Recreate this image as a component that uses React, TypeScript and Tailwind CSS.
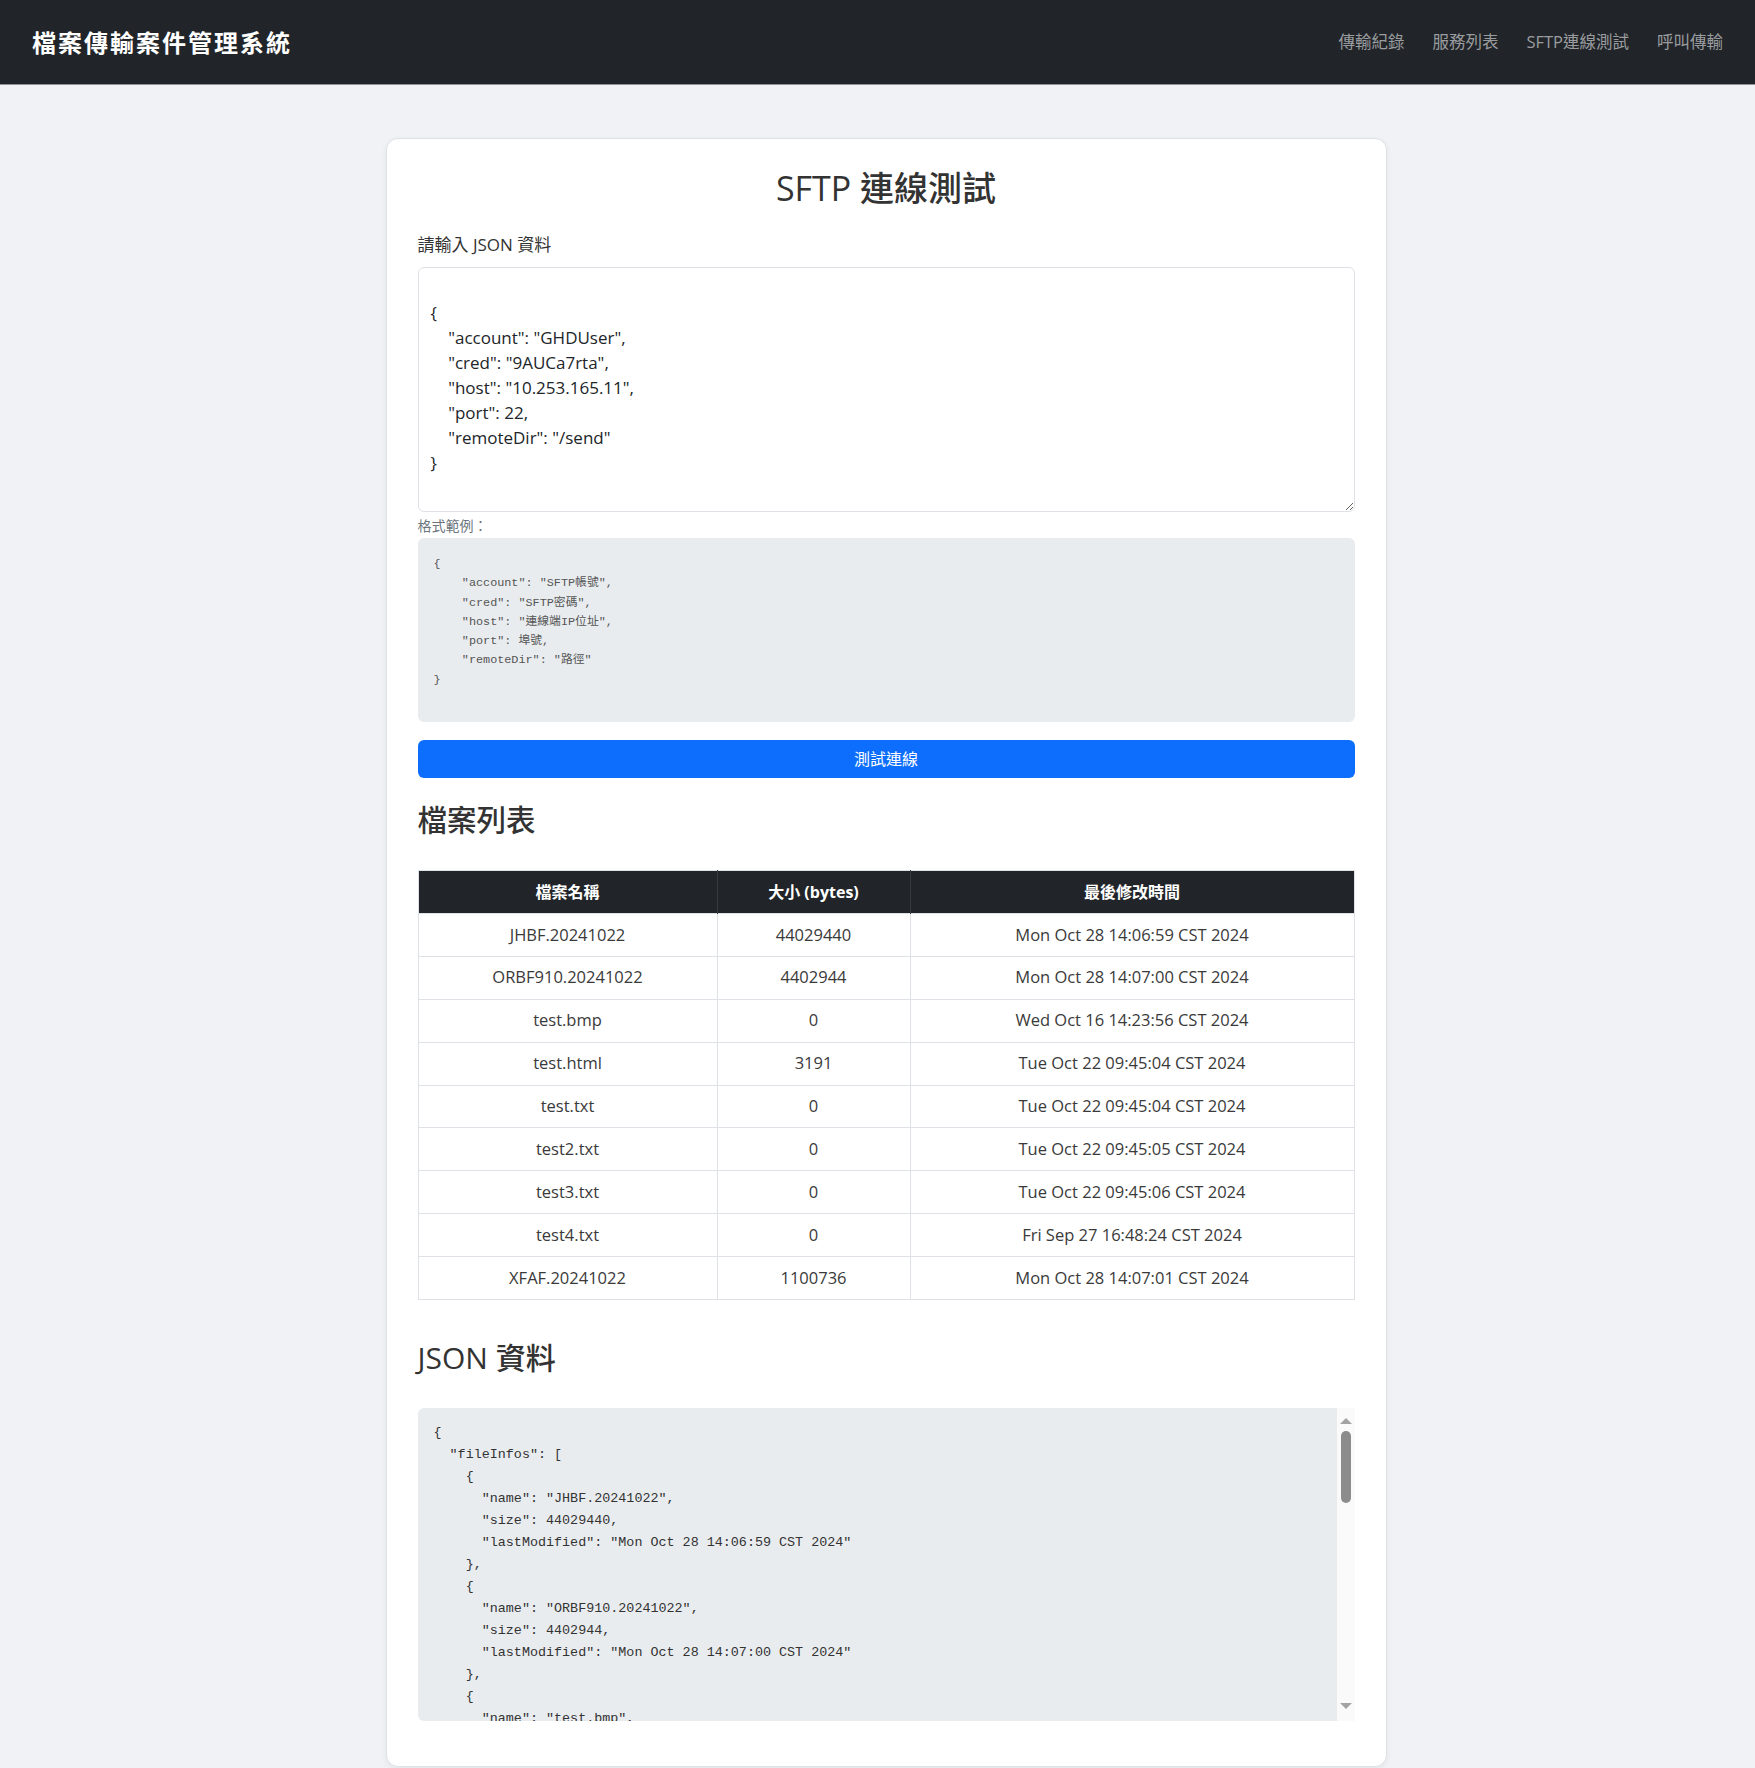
import React from 'react';

const files = [
  { name: 'JHBF.20241022', size: 44029440, lastModified: 'Mon Oct 28 14:06:59 CST 2024' },
  { name: 'ORBF910.20241022', size: 4402944, lastModified: 'Mon Oct 28 14:07:00 CST 2024' },
  { name: 'test.bmp', size: 0, lastModified: 'Wed Oct 16 14:23:56 CST 2024' },
  { name: 'test.html', size: 3191, lastModified: 'Tue Oct 22 09:45:04 CST 2024' },
  { name: 'test.txt', size: 0, lastModified: 'Tue Oct 22 09:45:04 CST 2024' },
  { name: 'test2.txt', size: 0, lastModified: 'Tue Oct 22 09:45:05 CST 2024' },
  { name: 'test3.txt', size: 0, lastModified: 'Tue Oct 22 09:45:06 CST 2024' },
  { name: 'test4.txt', size: 0, lastModified: 'Fri Sep 27 16:48:24 CST 2024' },
  { name: 'XFAF.20241022', size: 1100736, lastModified: 'Mon Oct 28 14:07:01 CST 2024' },
];

const inputJson = `
{
    "account": "GHDUser",
    "cred": "9AUCa7rta",
    "host": "10.253.165.11",
    "port": 22,
    "remoteDir": "/send"
}
`;

const sampleJson = `{
    "account": "SFTP帳號",
    "cred": "SFTP密碼",
    "host": "連線端IP位址",
    "port": 埠號,
    "remoteDir": "路徑"
}
`;

const navLinks = ['傳輸紀錄', '服務列表', 'SFTP連線測試', '呼叫傳輸'];

export default function App() {
  const resultJson = JSON.stringify({ fileInfos: files }, null, 2);

  return (
    <div className="min-h-screen bg-[#f0f2f5] font-['Open_Sans','Noto_Sans_CJK_TC',sans-serif] text-[#212529]">
      {/* Navbar */}
      <nav className="h-[85px] bg-[#212529] border-b border-[#8f9296] flex items-center justify-between pl-8 pr-[18px]">
        <div className="text-white text-[24px] font-bold tracking-[2px] font-['Noto_Sans_CJK_TC',sans-serif]">
          檔案傳輸案件管理系統
        </div>
        <div className="flex items-center">
          {navLinks.map((l) => (
            <a key={l} className="px-[14px] text-[16.5px] text-[#9a9c9f] cursor-pointer">
              {l}
            </a>
          ))}
        </div>
      </nav>

      {/* Main card */}
      <div className="flex justify-center pt-[53px] pl-[17px]">
        <div className="w-[1001px] bg-white rounded-[12px] border border-[#dee2e6] shadow-[0_2px_6px_rgba(0,0,0,0.06)] px-[31px] pt-[30px] pb-[45px]">
          <h2 className="text-[34px] leading-[38px] font-medium text-center text-[#333]">SFTP 連線測試</h2>

          <label className="block mt-[26px] text-[17px] leading-[24px] text-[#333]">請輸入 JSON 資料</label>
          <textarea
            defaultValue={inputJson}
            className="block w-full mt-[10px] h-[245px] border border-[#dee2e6] rounded-[6px] px-3 py-[7px] text-[17px] leading-[25px] text-[#212529] outline-none font-['Open_Sans','Noto_Sans_CJK_TC',sans-serif]"
          />

          <div className="mt-[3px] text-[14px] leading-[21px] text-[#6c757d]">格式範例：</div>
          <pre className="mt-[2px] h-[184px] bg-[#e9ecef] rounded-[6px] px-4 pt-[17px] text-[11.8px] leading-[19.3px] text-[#555] font-['Liberation_Mono','Noto_Sans_CJK_TC',monospace] overflow-hidden">
            {sampleJson}
          </pre>

          <button className="mt-[18px] w-full h-[38px] rounded-[6px] bg-[#0d6efd] text-white text-[16px]">
            測試連線
          </button>

          <h3 className="mt-[25px] text-[29.5px] leading-[34px] font-medium text-[#333]">檔案列表</h3>

          <table className="mt-[33px] w-full border-collapse border border-[#dee2e6] text-center">
            <thead>
              <tr className="bg-[#212529] text-white h-[43px]">
                <th className="w-[299px] font-bold text-[16px] border-r border-[#373b3e]">檔案名稱</th>
                <th className="w-[193px] font-bold text-[16px] border-r border-[#373b3e]">大小 (bytes)</th>
                <th className="font-bold text-[16px]">最後修改時間</th>
              </tr>
            </thead>
            <tbody className="text-[16.5px] text-[#3a3a3a]">
              {files.map((f) => (
                <tr key={f.name} className="h-[42.9px] border-t border-[#dee2e6]">
                  <td className="border-r border-[#dee2e6]">{f.name}</td>
                  <td className="border-r border-[#dee2e6]">{f.size}</td>
                  <td>{f.lastModified}</td>
                </tr>
              ))}
            </tbody>
          </table>

          <h3 className="mt-[41px] text-[30px] leading-[34px] font-medium text-[#333]">JSON 資料</h3>

          <div className="mt-[33px] h-[313px] flex">
            <pre className="flex-1 bg-[#e9ecef] rounded-l-[6px] px-4 py-[14px] text-[13.4px] leading-[22px] text-[#333] font-['Liberation_Mono',monospace] overflow-hidden">
              {resultJson}
            </pre>
            <div className="w-[18px] bg-[#fafafa] flex flex-col items-center">
              <div className="mt-[10px] w-0 h-0 border-l-[6px] border-r-[6px] border-b-[6px] border-l-transparent border-r-transparent border-b-[#a3a3a3]" />
              <div className="mt-[7px] w-[10px] h-[72px] rounded-full bg-[#8c8c8c]" />
              <div className="flex-1" />
              <div className="mb-[12px] w-0 h-0 border-l-[6px] border-r-[6px] border-t-[6px] border-l-transparent border-r-transparent border-t-[#a3a3a3]" />
            </div>
          </div>
        </div>
      </div>
    </div>
  );
}
